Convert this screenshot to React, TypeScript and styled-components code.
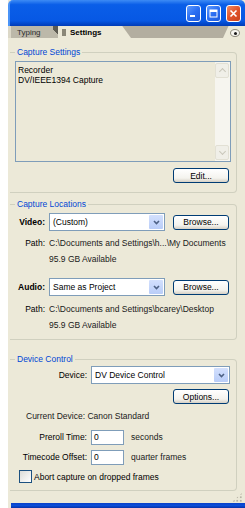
import styled, { createGlobalStyle } from 'styled-components'

const GlobalStyle = createGlobalStyle`
  html, body {
    margin: 0;
    padding: 0;
    background: #ffffff;
  }
  body {
    font-family: "Liberation Sans", Arial, sans-serif;
    font-size: 8.5px;
    color: #000;
  }
`

const Window = styled.div`
  margin-left: 8px;
  width: 237px;
  height: 508px;
  display: flex;
  flex-direction: column;
  background: #ece9d8;
`

const TitleBar = styled.div`
  height: 26px;
  box-sizing: border-box;
  display: flex;
  align-items: flex-start;
  justify-content: flex-end;
  gap: 5px;
  padding: 5px 4px 0 0;
  border-radius: 5px 5px 0 0;
  background: linear-gradient(180deg, #3d8bf5 0%, #0a5ee8 18%, #0758e4 80%, #0346c8 92%, #003cb8 100%);
  border-left: 2px solid #4a93f7;
`

const WinButton = styled.div<{ $close?: boolean }>`
  width: 15px;
  height: 17px;
  box-sizing: border-box;
  border: 1px solid #ffffff;
  border-radius: 3px;
  background: ${p =>
    p.$close
      ? 'linear-gradient(135deg, #f08a63 0%, #e2542a 50%, #c9431c 100%)'
      : 'linear-gradient(135deg, #5f9bff 0%, #2a6ef2 50%, #1c59dc 100%)'};
  display: flex;
  align-items: center;
  justify-content: center;
`

const TabStrip = styled.div`
  height: 12px;
  display: flex;
  align-items: stretch;
  background: #b3aea0;
`

const StripLead = styled.div`
  width: 3px;
  background: #dcd8c8;
`

const InactiveTab = styled.div`
  width: 42px;
  background: #bcb8a9;
  color: #2e2e2e;
  display: flex;
  align-items: center;
  padding-left: 6px;
  box-sizing: border-box;
  font-size: 8px;
`

const Notch = styled.div`
  width: 5px;
  background: linear-gradient(45deg, #bcb8a9 50%, #5d5b52 50%);
`

const ActiveTab = styled.div`
  width: 73px;
  background: #ece9d8;
  clip-path: polygon(0 0, 88% 0, 100% 100%, 0 100%);
  display: flex;
  align-items: center;
  gap: 4px;
  padding-left: 4px;
  box-sizing: border-box;
  font-weight: bold;
  font-size: 8px;
`

const Grip = styled.div`
  width: 4px;
  height: 7px;
  background-image: radial-gradient(circle, #8a8778 0.8px, transparent 1px);
  background-size: 2px 2px;
`

const StripFill = styled.div`
  flex: 1;
`

const FlyoutArea = styled.div`
  width: 22px;
  background: #ece9d8;
  clip-path: polygon(25% 0, 100% 0, 100% 100%, 0 100%);
  display: flex;
  align-items: flex-end;
  justify-content: flex-end;
  padding: 0 5px 1px 0;
  box-sizing: border-box;
`

const FlyoutButton = styled.div`
  width: 10px;
  height: 8px;
  border-radius: 50%;
  border: 1px solid #8d8a7c;
  background: #f7f6f0;
  box-sizing: border-box;
  display: flex;
  align-items: center;
  justify-content: center;
  &::after {
    content: '';
    width: 3px;
    height: 3px;
    border-radius: 50%;
    background: #1b1b1b;
  }
`

const Panel = styled.div`
  flex: 1;
  display: flex;
  flex-direction: column;
  padding: 14px 8px 0 2px;
  position: relative;
`

const Group = styled.div<{ $mt?: number }>`
  position: relative;
  border: 1px solid #d0d0bf;
  border-left: none;
  border-radius: 0 4px 4px 0;
  margin-top: ${p => p.$mt ?? 0}px;
  display: flex;
  flex-direction: column;
`

const Legend = styled.span`
  position: absolute;
  top: -6px;
  left: 5px;
  padding: 0 2px;
  background: #ece9d8;
  color: #0046d5;
  line-height: 11px;
`

const ListBox = styled.div`
  margin: 8px 5px 0 5px;
  height: 101px;
  border: 1px solid #7f9db9;
  box-sizing: border-box;
  display: flex;
  background: #ece9d8;
`

const ListItems = styled.div`
  flex: 1;
  padding: 3px 2px;
  line-height: 10px;
`

const ScrollBar = styled.div`
  width: 14px;
  background: #f6f5ef;
  display: flex;
  flex-direction: column;
  justify-content: space-between;
  padding: 1px 1px 1px 0;
`

const ScrollArrow = styled.div<{ $down?: boolean }>`
  height: 13px;
  border: 1px solid #e2e0d4;
  border-radius: 2px;
  background: #f0efe8;
  display: flex;
  align-items: center;
  justify-content: center;
  &::after {
    content: '';
    width: 4px;
    height: 4px;
    border-left: 1.5px solid #c9c7ba;
    border-top: 1.5px solid #c9c7ba;
    transform: ${p => (p.$down ? 'translateY(-1px) rotate(225deg)' : 'translateY(1px) rotate(45deg)')};
  }
`

const ButtonRow = styled.div<{ $mt: number; $mb?: number }>`
  display: flex;
  justify-content: flex-end;
  padding-right: 7px;
  margin-top: ${p => p.$mt}px;
  margin-bottom: ${p => p.$mb ?? 0}px;
`

const Button = styled.div`
  width: 56px;
  height: 15px;
  box-sizing: border-box;
  border: 1px solid #003c74;
  border-radius: 3px;
  background: linear-gradient(180deg, #ffffff 0%, #f4f3ee 70%, #d6d0c5 100%);
  display: flex;
  align-items: center;
  justify-content: center;
`

const FieldRow = styled.div<{ $mt?: number; $mb?: number; $h?: number }>`
  display: flex;
  align-items: center;
  height: ${p => p.$h ?? 16}px;
  margin-top: ${p => p.$mt ?? 0}px;
  margin-bottom: ${p => p.$mb ?? 0}px;
`

const Label = styled.span<{ $w: number; $bold?: boolean }>`
  width: ${p => p.$w}px;
  text-align: right;
  padding-right: 4px;
  box-sizing: border-box;
  font-weight: ${p => (p.$bold ? 'bold' : 'normal')};
  white-space: nowrap;
`

const Select = styled.div<{ $w: number }>`
  width: ${p => p.$w}px;
  height: 18px;
  box-sizing: border-box;
  border: 1px solid #7f9db9;
  background: #ffffff;
  display: flex;
  align-items: stretch;
`

const SelectValue = styled.span`
  flex: 1;
  display: flex;
  align-items: center;
  padding-left: 3px;
  white-space: nowrap;
  overflow: hidden;
`

const SelectArrow = styled.div`
  width: 14px;
  margin: 1px;
  border-radius: 1px;
  background: linear-gradient(180deg, #d3e0fd 0%, #b9cdf8 100%);
  display: flex;
  align-items: center;
  justify-content: center;
`

const BrowseButton = styled(Button)`
  margin-left: 8px;
`

const Info = styled.span<{ $ml?: number }>`
  margin-left: ${p => p.$ml ?? 0}px;
  white-space: nowrap;
  color: #1a1a1a;
`

const SmallInput = styled.div`
  width: 33px;
  height: 15px;
  box-sizing: border-box;
  border: 1px solid #7f9db9;
  background: #ffffff;
  display: flex;
  align-items: center;
  padding-left: 2px;
`

const CheckRow = styled.div`
  display: flex;
  align-items: center;
  gap: 2px;
  margin: 5px 0 7px 9px;
`

const CheckBox = styled.div`
  width: 13px;
  height: 13px;
  box-sizing: border-box;
  border: 1px solid #1c5180;
  background: linear-gradient(135deg, #dcdcd7 0%, #ffffff 100%);
`

const ResizeGrip = styled.div`
  position: absolute;
  right: 2px;
  bottom: 1px;
  width: 11px;
  height: 10px;
  background-image: radial-gradient(circle, #b8b4a6 0.9px, transparent 1.1px);
  background-size: 3.5px 3.5px;
  clip-path: polygon(100% 0, 100% 100%, 0 100%);
`

const BottomBar = styled.div`
  height: 5px;
  margin-left: 3px;
  background: linear-gradient(180deg, #0a40c8 0%, #0b4ed9 50%, #0832a8 100%);
`

const Chevron = () => (
  <svg width="7" height="5" viewBox="0 0 7 5">
    <path d="M1 1 L3.5 3.5 L6 1" stroke="#4d6185" strokeWidth="1.6" fill="none" />
  </svg>
)

export default function App() {
  return (
    <>
      <GlobalStyle />
      <Window>
        <TitleBar>
          <WinButton>
            <svg width="9" height="9" viewBox="0 0 9 9">
              <rect x="1" y="6" width="5" height="2" fill="#fff" />
            </svg>
          </WinButton>
          <WinButton>
            <svg width="9" height="9" viewBox="0 0 9 9">
              <rect x="1" y="1" width="7" height="7" stroke="#fff" strokeWidth="1" fill="none" />
              <rect x="1" y="1" width="7" height="2" fill="#fff" />
            </svg>
          </WinButton>
          <WinButton $close>
            <svg width="9" height="9" viewBox="0 0 9 9">
              <path d="M1.5 1.5 L7.5 7.5 M7.5 1.5 L1.5 7.5" stroke="#fff" strokeWidth="1.6" />
            </svg>
          </WinButton>
        </TitleBar>

        <TabStrip>
          <StripLead />
          <InactiveTab>Typing</InactiveTab>
          <Notch />
          <ActiveTab>
            <Grip />
            Settings
          </ActiveTab>
          <StripFill />
          <FlyoutArea>
            <FlyoutButton />
          </FlyoutArea>
        </TabStrip>

        <Panel>
          <Group>
            <Legend>Capture Settings</Legend>
            <ListBox>
              <ListItems>
                <div>Recorder</div>
                <div>DV/IEEE1394 Capture</div>
              </ListItems>
              <ScrollBar>
                <ScrollArrow />
                <ScrollArrow $down />
              </ScrollBar>
            </ListBox>
            <ButtonRow $mt={6} $mb={9}>
              <Button>Edit...</Button>
            </ButtonRow>
          </Group>

          <Group $mt={11}>
            <Legend>Capture Locations</Legend>
            <FieldRow $mt={8} $h={18}>
              <Label $w={39} $bold>Video:</Label>
              <Select $w={116}>
                <SelectValue>(Custom)</SelectValue>
                <SelectArrow><Chevron /></SelectArrow>
              </Select>
              <BrowseButton>Browse...</BrowseButton>
            </FieldRow>
            <FieldRow $mt={4}>
              <Label $w={39}>Path:</Label>
              <Info>C:\Documents and Settings\h...\My Documents</Info>
            </FieldRow>
            <FieldRow>
              <Info $ml={39}>95.9 GB Available</Info>
            </FieldRow>
            <FieldRow $mt={11} $h={18}>
              <Label $w={39} $bold>Audio:</Label>
              <Select $w={116}>
                <SelectValue>Same as Project</SelectValue>
                <SelectArrow><Chevron /></SelectArrow>
              </Select>
              <BrowseButton>Browse...</BrowseButton>
            </FieldRow>
            <FieldRow $mt={5}>
              <Label $w={39}>Path:</Label>
              <Info>C:\Documents and Settings\bcarey\Desktop</Info>
            </FieldRow>
            <FieldRow $mb={6}>
              <Info $ml={39}>95.9 GB Available</Info>
            </FieldRow>
          </Group>

          <Group $mt={19}>
            <Legend>Device Control</Legend>
            <FieldRow $mt={6} $h={18}>
              <Label $w={81}>Device:</Label>
              <Select $w={139}>
                <SelectValue>DV Device Control</SelectValue>
                <SelectArrow><Chevron /></SelectArrow>
              </Select>
            </FieldRow>
            <ButtonRow $mt={5}>
              <Button>Options...</Button>
            </ButtonRow>
            <FieldRow $mt={4}>
              <Info $ml={16}>Current Device: Canon Standard</Info>
            </FieldRow>
            <FieldRow $mt={5}>
              <Label $w={81}>Preroll Time:</Label>
              <SmallInput>0</SmallInput>
              <Info $ml={7}>seconds</Info>
            </FieldRow>
            <FieldRow $mt={4}>
              <Label $w={81}>Timecode Offset:</Label>
              <SmallInput>0</SmallInput>
              <Info $ml={7}>quarter frames</Info>
            </FieldRow>
            <CheckRow>
              <CheckBox />
              <span>Abort capture on dropped frames</span>
            </CheckRow>
          </Group>
          <ResizeGrip />
        </Panel>
        <BottomBar />
      </Window>
    </>
  )
}
